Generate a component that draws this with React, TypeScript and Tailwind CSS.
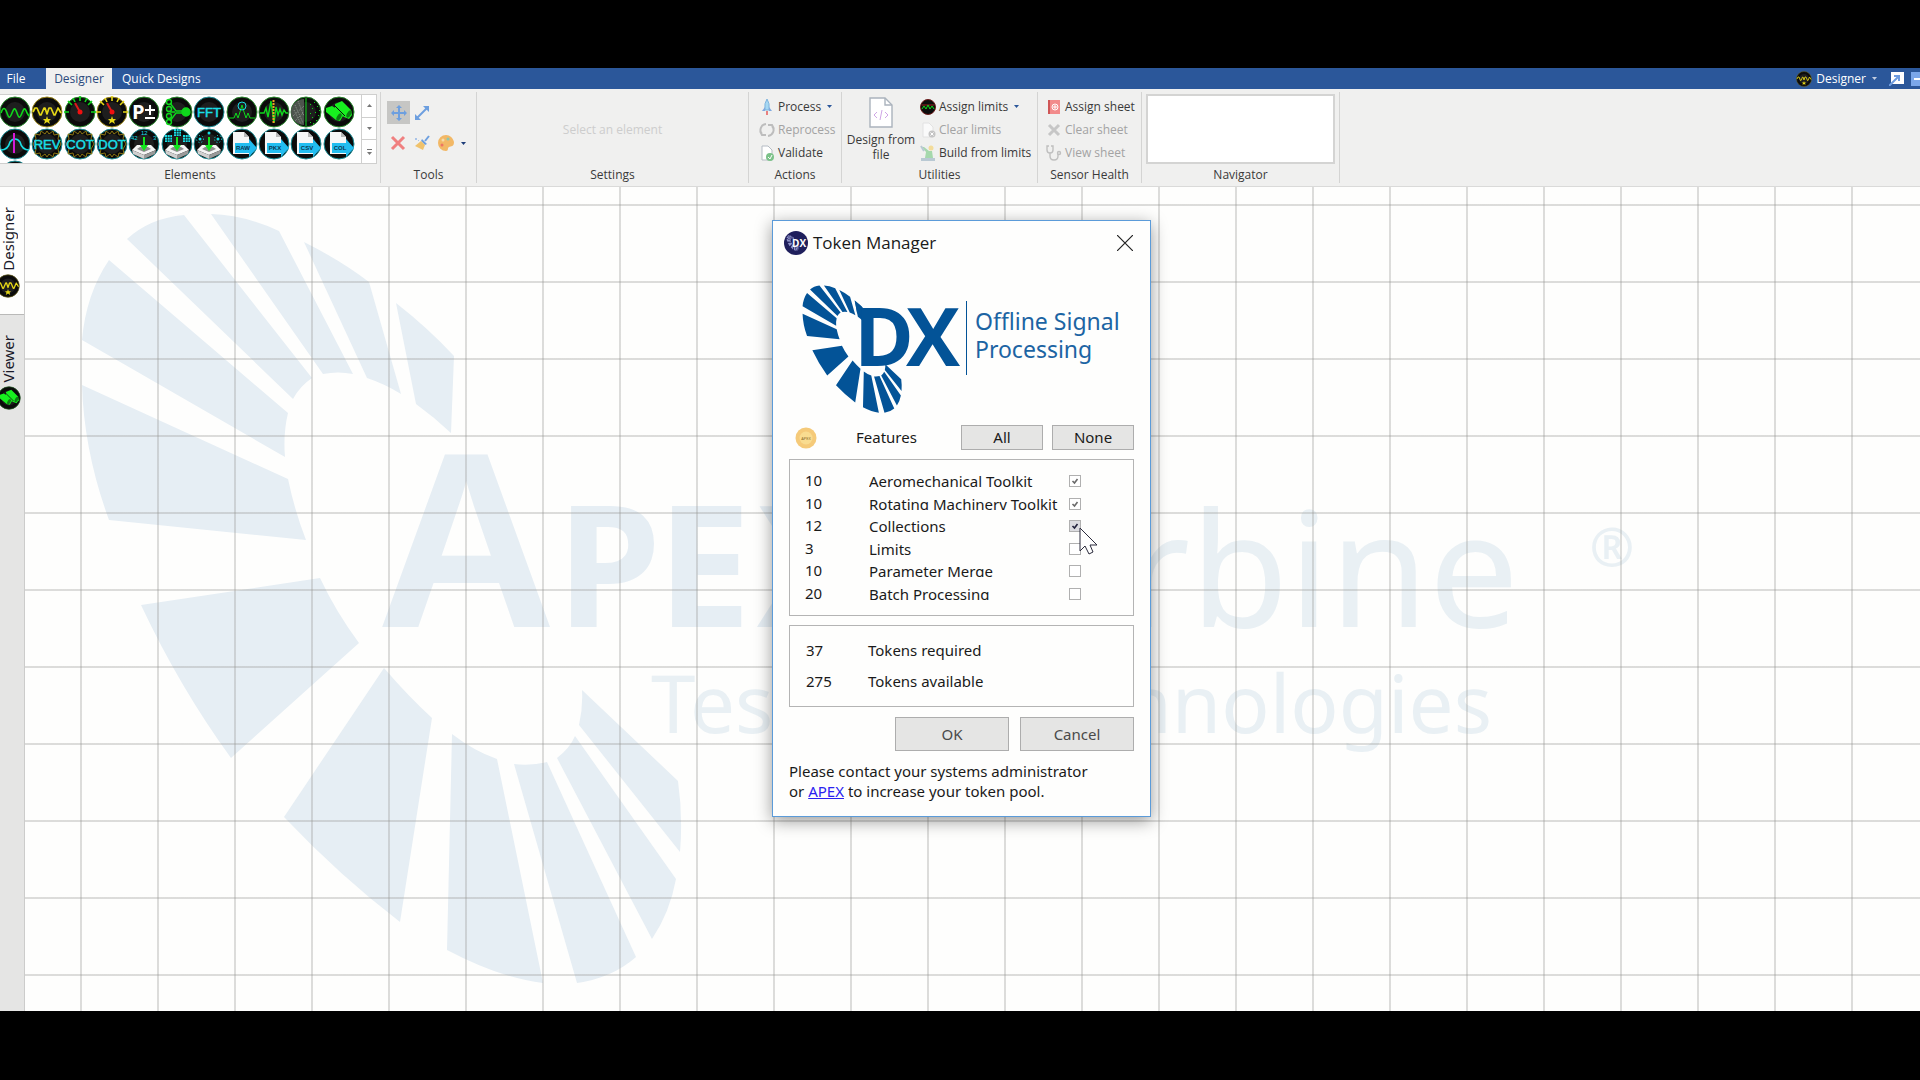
import { ReactNode, useState } from "react";
import clsx from "clsx";

const BLADES = [
  "M127 239Q150 218 184 215L312 378Q300 386 293 399Z",
  "M211 214Q245 215 279 231L353 374Q338 371 323 374Z",
  "M304 242Q340 260 369 282L401 394Q385 384 367 378Z",
  "M396 303Q428 328 454 356L451 433Q434 417 416 404Z",
  "M109 260L288 413Q283 434 285 457L82 340Q86 294 109 260Z",
  "M82 385L288 479Q295 512 306 540L109 520Q84 452 82 385Z",
  "M320 578Q336 612 359 643L231 758Q180 688 141 605Z",
  "M384 668Q408 696 432 718L400 922Q340 876 284 817Z",
  "M452 734Q474 751 497 759L543 983Q500 978 447 950Z",
  "M514 764Q531 766 547 762L636 957Q612 978 577 983Z",
  "M575 736L676 879Q670 912 652 939L557 758Q570 748 575 736Z",
  "M582 690L678 781Q683 816 680 852L579 725Q583 708 582 690Z",
];

const features = [
  { tokens: 10, name: "Aeromechanical Toolkit", checked: true },
  { tokens: 10, name: "Rotating Machinery Toolkit", checked: true },
  { tokens: 12, name: "Collections", checked: true },
  { tokens: 3, name: "Limits", checked: false },
  { tokens: 10, name: "Parameter Merge", checked: false },
  { tokens: 20, name: "Batch Processing", checked: false },
];

const GREEN = "#0fd81c";
const CYAN = "#19dfe6";
const YELLOW = "#e6d817";

function Blades() {
  return (
    <>
      {BLADES.map((d) => (
        <path key={d} d={d} />
      ))}
    </>
  );
}

function Disc({ ring, children, className }: { ring: string; children?: ReactNode; className?: string }) {
  return (
    <svg viewBox="0 0 32 32" className={clsx("shrink-0", className)} fill="none" aria-hidden="true">
      <circle cx="16" cy="16" r="15" fill="#0b0b0b" stroke={ring} strokeWidth="1" />
      <circle cx="16" cy="16" r="10" fill="#2b2b2b" opacity="0.6" />
      {children}
    </svg>
  );
}

const Wave = () => (
  <path
    d="M2 17C4 11 6 11 8 17S11 22 13 17S16 11 18 17S21 22 23 17S26 11 28 17L30 20"
    stroke={GREEN}
    strokeWidth="1.600"
  />
);

const Star = () => <path d="M16 20L17 23L20 23L18 25L19 28L16 26L13 28L14 25L12 23L15 23Z" fill={YELLOW} />;

const StarWave = () => (
  <>
    <path
      d="M2 16L4 12H6L9 19H10L13 12H14L16 18L18 12H20L23 19H24L27 12L30 17"
      stroke={YELLOW}
      strokeWidth="1.700"
      strokeLinejoin="round"
    />
    <Star />
  </>
);

function Gauge({ color, star }: { color: string; star?: boolean }) {
  return (
    <>
      <path d="M0 16H5M27 16H32M16 0V5M4 5L8 9M28 5L24 9M9 2L11 6M23 2L21 6" stroke={color} strokeWidth="1.6" />
      <path d="M16 16L11 7" stroke="#e01818" strokeWidth="2" />
      <circle cx="16" cy="16" r="2.5" fill="#f01010" />
      {star && <Star />}
    </>
  );
}

function DiscText({ children, gear }: { children: string; gear?: boolean }) {
  return (
    <>
      {gear && (
        <path
          d="M16 3L18 6L22 3L23 7L28 6L27 11L30 16L27 21L28 26L23 25L22 29L18 26L16 29L14 26L10 29L9 25L4 26L5 21L2 16L5 11L4 6L9 7L10 3L14 6Z"
          stroke="#8a7412"
        />
      )}
      <text
        x="16"
        y="21"
        textAnchor="middle"
        fontFamily="'Liberation Sans', sans-serif"
        fontSize="13"
        stroke={CYAN}
        strokeWidth="0.5"
        fill={CYAN}
      >
        {children}
      </text>
    </>
  );
}

const Binoculars = () => (
  <g fill="#17f01f">
    <path d="M3 12L9 10L19 16L20 20L17 25L13 24L3 16Z" />
    <path d="M12 8L19 5L28 14L29 19L26 23L21 21L12 13Z" />
    <path d="M11 9L22 20" stroke="#0b0b0b" />
    <ellipse cx="16" cy="21" rx="2" ry="4" fill="#0c7d12" transform="rotate(30 16 21)" />
    <ellipse cx="26" cy="18" rx="2" ry="4" fill="#0c7d12" transform="rotate(30 26 18)" />
  </g>
);

function Tray({ children }: { children: ReactNode }) {
  return (
    <>
      <path d="M4 22L9 17H23L28 22L16 27Z" fill="#f4f4f4" />
      <path d="M4 22L16 27V31L5 26Z" fill="#d0d0d0" />
      <path d="M28 22L16 27V31L27 26Z" fill="#9a9a9a" />
      <path d="M9 21L12 19H20L23 21L16 24Z" fill="#8d8d8d" />
      <path d="M16 9V18" stroke="#12e51c" strokeWidth="2" />
      <path d="M12 17H20L16 23Z" fill="#12e51c" />
      {children}
    </>
  );
}

function ExportFile({ label }: { label: string }) {
  return (
    <>
      <path d="M7 4H18L23 9V26H7Z" fill="#f7f7f7" />
      <path d="M18 4V9H23Z" fill="#b9b9b9" />
      <path d="M9 15H23V11L31 20L23 29V25H9Z" fill="#22bdf0" />
      <text
        x="17"
        y="22"
        textAnchor="middle"
        fontFamily="'Liberation Sans', sans-serif"
        fontWeight="700"
        fontSize="6"
        fill="#0b3550"
      >
        {label}
      </text>
    </>
  );
}

const dots = [
  [20, 8], [24, 6], [22, 12], [27, 10], [20, 17], [25, 16], [28, 19], [22, 21], [26, 24], [20, 26], [29, 14], [23, 27],
];

const elements: { name: string; ring: string; art: ReactNode }[] = [
  { name: "Signal", ring: "#2a8a2e", art: <Wave /> },
  { name: "Designer signal", ring: "#a08a1c", art: <StarWave /> },
  { name: "Gauge", ring: "#2a8a2e", art: <Gauge color={GREEN} /> },
  { name: "Starred gauge", ring: "#a08a1c", art: <Gauge color={YELLOW} star /> },
  {
    name: "Parameter",
    ring: "#2a8a2e",
    art: (
      <>
        <text x="4" y="23" fontFamily="'Open Sans', sans-serif" fontWeight="700" fontSize="20" fill="#fff">
          P
        </text>
        <path d="M17 14H27M22 9V19M17 22H27" stroke="#fff" strokeWidth="2" />
      </>
    ),
  },
  {
    name: "Combine",
    ring: "#2a8a2e",
    art: (
      <g stroke={GREEN} strokeWidth="1.4">
        <path d="M9 7L15 15H24M9 25L15 17H24M9 16H14" />
        <circle cx="8" cy="6" r="2.5" />
        <circle cx="8" cy="13" r="2.5" />
        <circle cx="8" cy="20" r="2.5" />
        <circle cx="8" cy="26" r="2.5" />
        <circle cx="25" cy="16" r="4" fill={GREEN} />
      </g>
    ),
  },
  { name: "FFT", ring: "#1c8f98", art: <DiscText>FFT</DiscText> },
  {
    name: "Peak search",
    ring: "#2a8a2e",
    art: (
      <>
        <path d="M3 22H8L10 17L12 22L14 16L16 9L18 16L20 22L22 17L24 22H29" stroke={GREEN} />
        <circle cx="16" cy="10" r="4" stroke={CYAN} />
      </>
    ),
  },
  {
    name: "Threshold",
    ring: "#2a8a2e",
    art: (
      <>
        <path d="M2 17H6L8 12L10 21L13 5L16 27L18 11L20 19L22 13L24 19L26 14L28 17H30" stroke={GREEN} strokeWidth="1.4" />
        <path d="M15.500 4V28" stroke="#f0a020" strokeWidth="2" strokeDasharray="2 1" />
      </>
    ),
  },
  {
    name: "Filter noise",
    ring: "#2a8a2e",
    art: (
      <>
        <path d="M14 3A13 13 0 0 0 14 29Z" fill="#4d544d" />
        <path d="M5 9L13 27M4 14L11 28M8 5L14 20M3 20L14 10M5 25L13 17" stroke="#8b948b" strokeDasharray="1 1" />
        <path d="M16 2V30" stroke={GREEN} />
        {dots.map(([x, y]) => (
          <rect key={`${x}-${y}`} x={x} y={y} width="1" height="1" fill={GREEN} />
        ))}
      </>
    ),
  },
  { name: "Viewer", ring: "#2a8a2e", art: <Binoculars /> },
  {
    name: "Resonance",
    ring: "#1c8f98",
    art: (
      <>
        <path d="M2 22Q9 22 11 14Q13 11 16 11Q19 11 21 14Q23 22 30 22" stroke={CYAN} strokeWidth="1.6" />
        <path d="M15 5V25" stroke="#d51ad5" strokeWidth="2" />
      </>
    ),
  },
  { name: "REV", ring: "#1c8f98", art: <DiscText gear>REV</DiscText> },
  { name: "COT", ring: "#1c8f98", art: <DiscText gear>COT</DiscText> },
  { name: "DOT", ring: "#1c8f98", art: <DiscText gear>DOT</DiscText> },
  {
    name: "Collect numbers",
    ring: "#1c8f98",
    art: (
      <Tray>
        <g fill={CYAN} fontFamily="'Liberation Sans', sans-serif" fontSize="6">
          <text x="13" y="7">12</text>
          <text x="3" y="12">42</text>
          <text x="25" y="12">3</text>
        </g>
      </Tray>
    ),
  },
  {
    name: "Collect grids",
    ring: "#1c8f98",
    art: (
      <Tray>
        <path d="M13 1h7v7h-7zM4 7h7v7h-7zM22 7h7v7h-7z" fill={CYAN} />
        <path
          d="M13 3.500h7M13 6h7M4 9.500h7M4 12h7M22 9.500h7M22 12h7M15.500 1v7M18 1v7M6.500 7v7M9 7v7M24.500 7v7M27 7v7"
          stroke="#0b0b0b"
          strokeWidth="0.6"
        />
      </Tray>
    ),
  },
  {
    name: "Collect points",
    ring: "#1c8f98",
    art: (
      <Tray>
        <circle cx="16" cy="5" r="1.500" fill={CYAN} />
        <circle cx="7" cy="11" r="1.500" fill={CYAN} />
        <circle cx="25" cy="11" r="1.500" fill={CYAN} />
        <circle cx="7" cy="11" r="3.500" stroke={CYAN} strokeDasharray="1 2" />
        <circle cx="25" cy="11" r="3.500" stroke={CYAN} strokeDasharray="1 2" />
      </Tray>
    ),
  },
  { name: "Export RAW", ring: "#1c8f98", art: <ExportFile label="RAW" /> },
  { name: "Export PKX", ring: "#1c8f98", art: <ExportFile label="PKX" /> },
  { name: "Export CSV", ring: "#1c8f98", art: <ExportFile label="CSV" /> },
  { name: "Export COL", ring: "#1c8f98", art: <ExportFile label="COL" /> },
  { name: "More", ring: "#1c8f98", art: null },
];

function Caret({ className }: { className?: string }) {
  return (
    <svg viewBox="0 0 5 3" className={clsx("h-[3px] w-[5px]", className)} aria-hidden="true">
      <path d="M0 0H5L2.500 3Z" fill="currentColor" />
    </svg>
  );
}

function Group({ label, className, children }: { label: string; className?: string; children?: ReactNode }) {
  return (
    <section aria-label={label} className="flex py-[3px]">
      <div className="flex flex-col">
        <div className={clsx("h-[75px] pt-0.5", className)}>{children}</div>
        <p className="text-center leading-4">{label}</p>
      </div>
      <div className="w-px bg-[#d4d4d3]" />
    </section>
  );
}

function Command({ icon, label, disabled, menu }: { icon: ReactNode; label: string; disabled?: boolean; menu?: boolean }) {
  return (
    <button
      type="button"
      disabled={disabled}
      className={clsx("flex h-[23px] items-center gap-[3px] whitespace-nowrap", disabled && "text-[#a3a3a3]")}
    >
      <svg viewBox="0 0 16 16" className="size-4" fill="none" aria-hidden="true">
        {icon}
      </svg>
      {label}
      {menu && <Caret className="ml-[3px] text-[#2b579a]" />}
    </button>
  );
}

function TitleBar() {
  return (
    <header className="flex h-[21px] items-stretch bg-[#2b579a] text-white">
      <nav className="flex">
        <button type="button" className="w-[46px] pr-3.5 text-center">
          File
        </button>
        <button type="button" className="w-[66px] bg-[#f0f0ef] text-[#2b4a7c]">
          Designer
        </button>
        <button type="button" className="px-2.5">
          Quick Designs
        </button>
      </nav>
      <div className="ml-auto flex items-center">
        <button type="button" className="flex items-center gap-1">
          <Disc ring="#6f6212" className="size-4">
            <StarWave />
          </Disc>
          Designer
          <Caret className="ml-0.5 text-[#c3cde0]" />
        </button>
        <button type="button" aria-label="Pop out" className="ml-3">
          <svg viewBox="0 0 15 14" className="h-3.5 w-[15px]" aria-hidden="true">
            <path d="M2 0H15V12H2Z" fill="#fff" />
            <path d="M0 14L9 5M5 4H10V9" stroke="#6e9ce0" strokeWidth="2" fill="none" />
          </svg>
        </button>
        <button type="button" aria-label="Minimize" className="ml-[7px]">
          <svg viewBox="0 0 9 14" className="h-3.5 w-[9px]" aria-hidden="true">
            <path d="M0 0H9V14H0Z" fill="#7ba7ea" />
            <path d="M3 7H9" stroke="#fff" strokeWidth="2" />
          </svg>
        </button>
      </div>
    </header>
  );
}

function Ribbon() {
  return (
    <div className="flex h-[98px] border-b border-[#dadad9] bg-[#f0f0ef]">
      <Group label="Elements" className="flex w-[380px] pr-[3px]">
        <div className="h-[70px] flex-1 overflow-hidden border-y border-[#cfcfce] bg-white pt-px">
          <div className="-ml-px grid w-[356px] auto-rows-[32px] grid-cols-11">
            {elements.map((el) => (
              <button key={el.name} type="button" aria-label={el.name}>
                <Disc ring={el.ring} className="size-8">
                  {el.art}
                </Disc>
              </button>
            ))}
          </div>
        </div>
        <div className="grid h-[70px] w-4 grid-rows-3 divide-y divide-[#cfcfce] border border-[#cfcfce] bg-white text-[#777]">
          <button type="button" aria-label="Scroll up" className="flex items-center justify-center">
            <Caret className="rotate-180" />
          </button>
          <button type="button" aria-label="Scroll down" className="flex items-center justify-center">
            <Caret />
          </button>
          <button type="button" aria-label="Show all" className="flex flex-col items-center justify-center gap-0.5">
            <div className="h-px w-[5px] bg-current" />
            <Caret />
          </button>
        </div>
      </Group>

      <Group label="Tools" className="w-[95px] pl-1.5">
        <div className="mt-[7px] flex items-center gap-1">
          <button type="button" aria-label="Move" className="flex size-[23px] items-center justify-center bg-[#c6c6c4]">
            <svg viewBox="0 0 16 16" className="size-4" aria-hidden="true">
              <path d="M8 0L11 3H9V7H13V5L16 8L13 11V9H9V13H11L8 16L5 13H7V9H3V11L0 8L3 5V7H7V3H5Z" fill="#6d9fdf" />
            </svg>
          </button>
          <button type="button" aria-label="Connect">
            <svg viewBox="0 0 16 16" className="size-4" aria-hidden="true">
              <path d="M3 13L13 3" stroke="#6d9fdf" strokeWidth="2" />
              <path d="M9 1H15V7ZM1 9V15H7Z" fill="#6d9fdf" />
            </svg>
          </button>
        </div>
        <div className="mt-[11px] flex items-center gap-2 pl-[3px]">
          <button type="button" aria-label="Delete">
            <svg viewBox="0 0 16 16" className="size-4" aria-hidden="true">
              <path d="M2 2L14 14M14 2L2 14" stroke="#f08080" strokeWidth="3" />
            </svg>
          </button>
          <button type="button" aria-label="Clean">
            <svg viewBox="0 0 16 16" className="size-4" aria-hidden="true">
              <path d="M15 1L11 6" stroke="#6d9fdf" strokeWidth="2" />
              <path d="M8 4L13 9L11 10L7 6Z" fill="#6d9fdf" />
              <path d="M7 6L11 10L9 15L1 11Z" fill="#f0c26b" />
              <path d="M1 3h2v2h-2zM4 5h1v1h-1z" fill="#a9c4e8" />
            </svg>
          </button>
          <button type="button" aria-label="Theme" className="flex items-center">
            <svg viewBox="0 0 16 16" className="size-4" aria-hidden="true">
              <path d="M8 0A8 8 0 0 0 8 16C11 16 9 13 11 12S16 12 16 7C15 3 12 0 8 0Z" fill="#f2b866" />
              <circle cx="5" cy="5" r="1.500" fill="#f7dba8" />
              <circle cx="10" cy="4" r="1.500" fill="#8cc7b0" />
              <circle cx="4" cy="10" r="1.500" fill="#ee7464" />
            </svg>
            <Caret className="ml-[7px] text-[#1d3c78]" />
          </button>
        </div>
      </Group>

      <Group label="Settings" className="flex w-[271px] items-center justify-center pb-0.5 text-[#cdcdcd]">
        Select an element
      </Group>

      <Group label="Actions" className="w-[92px] pt-[3px] pl-2.5">
        <Command
          label="Process"
          menu
          icon={
            <>
              <path d="M8 0Q11 4 10 11H6Q5 4 8 0Z" fill="#a6d8f3" stroke="#7fb4dc" />
              <path d="M6 8L3 12H6ZM10 8L13 12H10Z" fill="#7fa9e0" />
              <path d="M7 12H9V16H7Z" fill="#e88080" />
            </>
          }
        />
        <Command
          label="Reprocess"
          disabled
          icon={<path d="M7 2A6 6 0 0 0 3 12M1 9L3 13H7M9 14A6 6 0 0 0 13 4M15 7L13 3H9" stroke="#bdbdbd" strokeWidth="2" />}
        />
        <Command
          label="Validate"
          icon={
            <>
              <path d="M3 1H9L13 5V15H3Z" fill="#fff" stroke="#b5bcc4" />
              <circle cx="11" cy="12" r="4" fill="#7cc28a" />
              <path d="M9 12L11 14L13 10" stroke="#fff" />
            </>
          }
        />
      </Group>

      <Group label="Utilities" className="flex w-[195px] pt-[3px] pl-1">
        <button type="button" className="flex w-[70px] flex-col items-center pt-0.5 leading-[15px]">
          <svg viewBox="0 0 24 31" className="mb-1 h-[31px] w-6" fill="none" aria-hidden="true">
            <path d="M1 1H16L23 8V30H1Z" fill="#fff" stroke="#aab3bd" strokeWidth="1.400" />
            <path d="M16 1V8H23" stroke="#aab3bd" strokeWidth="1.400" />
            <path d="M8 15L5 18L8 21M16 15L19 18L16 21M13 13L11 23" stroke="#cfa6e6" />
          </svg>
          Design from file
        </button>
        <div className="pl-1">
          <Command
            label="Assign limits"
            menu
            icon={
              <>
                <circle cx="8" cy="8" r="7.500" fill="#0d0d0d" stroke="#6d1c1c" />
                <path d="M2 6H14" stroke="#a02020" />
                <path d="M2 10L4 7L6 10L8 6L10 10L12 7L14 10" stroke={GREEN} />
              </>
            }
          />
          <Command
            label="Clear limits"
            disabled
            icon={
              <>
                <path d="M3 1H9L13 5V15H3Z" fill="#fafafa" stroke="#e2e2e2" />
                <circle cx="12" cy="12" r="3.500" fill="#c4c4c4" />
                <path d="M10.500 10.500L13.500 13.500M13.500 10.500L10.500 13.500" stroke="#fff" />
              </>
            }
          />
          <Command
            label="Build from limits"
            icon={
              <>
                <path d="M1 13H15V16H1Z" fill="#b9c9d3" />
                <path d="M5 13L6 7L2 2L4 2L9 6H12L13 13Z" fill="#a5d8ac" />
                <circle cx="11" cy="3" r="2.500" fill="#f3dc9a" />
                <path d="M1 1L4 6" stroke="#b9c9d3" strokeWidth="2" />
              </>
            }
          />
        </div>
      </Group>

      <Group label="Sensor Health" className="w-[103px] pt-[3px] pl-2">
        <Command
          label="Assign sheet"
          icon={
            <>
              <path d="M2 1H14V15H2Z" fill="#f28b8b" />
              <path d="M3 1V15" stroke="#cf5656" strokeWidth="2" />
              <circle cx="9" cy="8" r="3" stroke="#fff" />
              <path d="M9 6V10M7 8H11" stroke="#fff" />
            </>
          }
        />
        <Command
          label="Clear sheet"
          disabled
          icon={<path d="M3 3L13 13M13 3L3 13" stroke="#c6c6c6" strokeWidth="3" />}
        />
        <Command
          label="View sheet"
          disabled
          icon={
            <g stroke="#bfbfbf" strokeWidth="1.400">
              <path d="M3 1H1V5Q1 8 4 8T7 5V1H5M4 8V11Q4 15 8 15T12 11V9" />
              <circle cx="13" cy="8" r="1.500" />
            </g>
          }
        />
      </Group>

      <Group label="Navigator" className="w-[197px] px-1">
        <div className="h-[70px] border-2 border-[#d4d4d3] bg-white" />
      </Group>
    </div>
  );
}

function SideTabs() {
  return (
    <aside className="z-10 flex w-[25px] shrink-0 flex-col overflow-hidden border-r border-[#cccccb] bg-[#e5e5e4] text-[15px] text-[#1a1a2a]">
      <button
        type="button"
        className="flex h-32 flex-col items-start border-b border-[#b9b9b8] bg-[#fefefd] pt-5"
      >
        <span className="rotate-180 leading-4 [writing-mode:vertical-rl]">Designer</span>
        <Disc ring="#57500f" className="mt-[3px] -ml-1 size-6">
          <StarWave />
        </Disc>
      </button>
      <button type="button" className="flex flex-col items-start pt-5">
        <span className="rotate-180 leading-4 [writing-mode:vertical-rl]">Viewer</span>
        <Disc ring="#174d19" className="mt-1 -ml-[3px] size-6">
          <Binoculars />
        </Disc>
      </button>
    </aside>
  );
}

function Watermark() {
  return (
    <svg
      viewBox="25 187 1700 824"
      className="absolute top-0 left-0 h-[824px] w-[1700px] max-w-none"
      fill="#e6eef4"
      fontFamily="'Noto Sans', sans-serif"
      aria-hidden="true"
    >
      <Blades />
      <text x="376" y="627" fontFamily="'Liberation Sans', sans-serif" fontWeight="700" fontSize="250">
        A
      </text>
      <text x="556 657 757" y="627" fontFamily="'Open Sans', sans-serif" fontWeight="700" fontSize="168">
        PEX
      </text>
      <g fill="#e9f0f4">
        <text x="1519" y="627" fontSize="160" textAnchor="end">
          Turbine
        </text>
        <text x="651" y="733" fontSize="80">
          Testing
        </text>
        <text x="1492" y="733" fontSize="80" textAnchor="end">
          Technologies
        </text>
        <text x="1612" y="566" fontSize="54" fontWeight="700" textAnchor="middle">
          ®
        </text>
      </g>
    </svg>
  );
}

function DialogLogo() {
  return (
    <svg
      viewBox="789 275 346 145"
      className="h-[145px] w-[346px]"
      fill="#035397"
      fontFamily="'Noto Sans', sans-serif"
      role="img"
      aria-label="DX Offline Signal Processing"
    >
      <g transform="translate(789 250) scale(0.1655)">
        <Blades />
      </g>
      <path d="M855 301L862 307V316L857 313Z" />
      <text x="854 906" y="366" fontFamily="'Open Sans', sans-serif" fontWeight="700" fontSize="81">
        DX
      </text>
      <rect x="966" y="301" width="1" height="74" />
      <text x="975" y="330" fontSize="23" fill="#1c64a3">
        Offline Signal
      </text>
      <text x="975" y="358" fontSize="23" fill="#1c64a3">
        Processing
      </text>
    </svg>
  );
}

const button = "border border-[#adadad] bg-[#e5e5e4] text-[15px] leading-5";

function TokenManager() {
  const [checks, setChecks] = useState(features.map((f) => f.checked));

  return (
    <div
      role="dialog"
      aria-labelledby="token-title"
      className="h-fit w-[379px] border border-[#5b9bd9] bg-[#fefefd] px-4 pb-[15px] font-['Noto_Sans',sans-serif] text-[15px] leading-5 text-[#1a1a1a] shadow-[0_4px_16px_rgba(0,0,0,0.4)]"
    >
      <div className="-ml-[5px] flex h-11 items-center font-['Open_Sans',sans-serif] text-[17px]">
        <svg viewBox="0 0 24 24" className="mr-[5px] size-6" aria-hidden="true">
          <circle cx="12" cy="12" r="12" fill="#1f1f5c" />
          <g transform="translate(1 0) scale(0.02)" fill="#8f93c8">
            <Blades />
          </g>
          <text x="8" y="16" fontFamily="'Open Sans', sans-serif" fontWeight="700" fontSize="10" fill="#fff">
            DX
          </text>
        </svg>
        <h1 id="token-title">Token Manager</h1>
        <button type="button" aria-label="Close" className="mr-px ml-auto">
          <svg viewBox="0 0 16 16" className="size-4" aria-hidden="true">
            <path d="M0 0L16 16M16 0L0 16" stroke="#222" strokeWidth="1.200" />
          </svg>
        </button>
      </div>

      <div className="mt-2.5">
        <DialogLogo />
      </div>

      <div className="mt-[5px] flex items-center">
        <svg viewBox="0 0 22 22" className="ml-1.5 size-[22px]" aria-hidden="true">
          <circle cx="11" cy="11" r="10.500" fill="#f5ca79" />
          <circle cx="11" cy="11" r="6.500" fill="#f9dc90" />
          <text x="11" y="12.500" textAnchor="middle" fontSize="4" fontFamily="'Noto Sans', sans-serif" fill="#8a6a2a">
            APEX
          </text>
        </svg>
        <span className="ml-[39px] pb-0.5">Features</span>
        <div className="ml-auto flex gap-[9px]">
          <button type="button" className={clsx(button, "h-[25px] w-[82px] pb-0.5")} onClick={() => setChecks(checks.map(() => true))}>
            All
          </button>
          <button type="button" className={clsx(button, "h-[25px] w-[82px] pb-0.5")} onClick={() => setChecks(checks.map(() => false))}>
            None
          </button>
        </div>
      </div>

      <ul className="relative mt-[9px] grid h-[157px] auto-rows-fr border border-[#b4b4b4] pt-2.5 pb-2.5 pl-[15px]">
        {features.map((f, i) => (
          <li key={f.name} className="flex items-center">
            <span className="w-16 pb-0.5">{f.tokens}</span>
            <label htmlFor={`feature-${i}`} className="-mt-1 h-4 w-[200px] overflow-hidden">
              {f.name}
            </label>
            <input
              id={`feature-${i}`}
              type="checkbox"
              checked={checks[i]}
              onChange={() => setChecks(checks.map((c, n) => (n === i ? !c : c)))}
              className={clsx(
                "peer size-3 appearance-none border border-[#b0b0b0]",
                i === 2 ? "bg-[#dcdce0]" : "bg-white"
              )}
            />
            <svg
              viewBox="0 0 12 12"
              className="pointer-events-none invisible -ml-3 size-3 peer-checked:visible"
              aria-hidden="true"
            >
              <path d="M3.500 6L5.500 8L8.500 4" stroke={i === 2 ? "#22223c" : "#6a6a6a"} strokeWidth="1.600" fill="none" />
            </svg>
          </li>
        ))}
        <svg viewBox="0 0 19 28" className="absolute top-[67px] left-[289px] h-7 w-[19px]" aria-hidden="true">
          <path
            d="M1 1V24L6 19L10 27L14 25L11 18H18Z"
            fill="#fff"
            stroke="#2b2b3c"
            strokeLinejoin="round"
          />
        </svg>
      </ul>

      <dl className="mt-[9px] grid h-[82px] grid-cols-[62px_1fr] content-center gap-y-[11px] border border-[#b4b4b4] pb-px pl-4">
        <dd>37</dd>
        <dt>Tokens required</dt>
        <dd>275</dd>
        <dt>Tokens available</dt>
      </dl>

      <div className="mt-2.5 flex justify-end gap-[11px] text-[#4a4a4a]">
        <button type="button" className={clsx(button, "h-[34px] w-[114px]")}>
          OK
        </button>
        <button type="button" className={clsx(button, "h-[34px] w-[114px]")}>
          Cancel
        </button>
      </div>

      <p className="mt-2.5 leading-5">
        Please contact your systems administrator
        <br />
        or{" "}
        <a href="#apex" className="text-[#2a22f0] underline">
          APEX
        </a>{" "}
        to increase your token pool.
      </p>
    </div>
  );
}

export default function App() {
  return (
    <div className="flex h-screen flex-col overflow-hidden bg-black pt-[68px] pb-[69px] font-['Open_Sans',sans-serif] text-xs text-[#3a3a3a]">
      <TitleBar />
      <Ribbon />
      <div className="relative flex min-h-0 flex-1 overflow-hidden font-['Noto_Sans',sans-serif]">
        <SideTabs />
        <main className="relative flex-1 overflow-hidden bg-[#fefefd]">
          <Watermark />
          <div className="absolute inset-0 bg-[linear-gradient(90deg,rgba(150,150,145,0.32)_2px,transparent_2px),linear-gradient(rgba(150,150,145,0.32)_2px,transparent_2px)] bg-size-[77px_77px] bg-position-[55px_17px]" />
        </main>
        <div className="absolute inset-0 z-20 flex justify-center pt-[33px] pl-[3px]">
          <TokenManager />
        </div>
      </div>
    </div>
  );
}
